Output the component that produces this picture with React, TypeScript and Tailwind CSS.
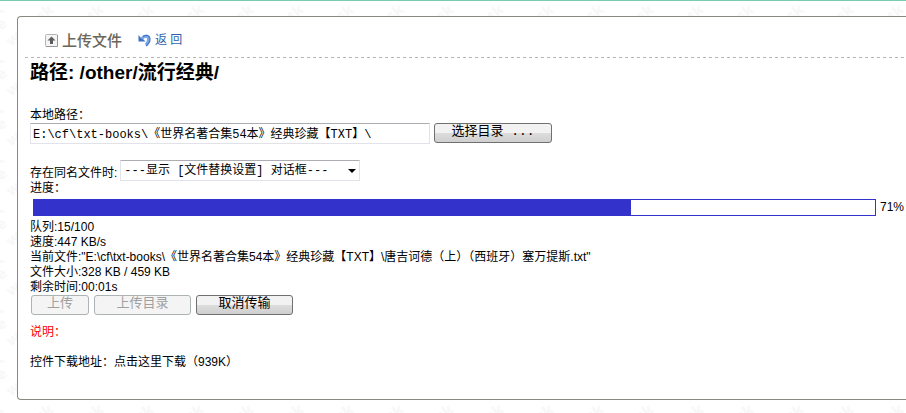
import { useState } from "react"

const stats = [
  { label: "队列", value: "15/100" },
  { label: "速度", value: "447 KB/s" },
  { label: "当前文件", value: '"E:\\cf\\txt-books\\《世界名著合集54本》经典珍藏【TXT】\\唐吉诃德（上）（西班牙）塞万提斯.txt"' },
  { label: "文件大小", value: "328 KB / 459 KB" },
  { label: "剩余时间", value: "00:01s" },
]

const buttonClass =
  "h-5 rounded-[3px] border border-[#707070] bg-linear-to-b from-[#f2f2f2] from-50% via-[#dddddd] via-50% to-[#cfcfcf] pb-0.5 font-['Liberation_Mono','Noto_Sans_CJK_SC',monospace] text-[13px] leading-4 text-black disabled:border-[#adb2b5] disabled:bg-none disabled:bg-[#f4f4f4] disabled:text-[#a0a0a0]"

const UploadIcon = () => (
  <svg width="13" height="13" viewBox="0 0 13 13" aria-hidden="true">
    <rect x="0.5" y="0.5" width="12" height="12" rx="1" fill="#f4f4f4" stroke="#b4b4b4" />
    <path d="M1 12.5h11.5V1" fill="none" stroke="#969696" />
    <path d="M6.5 2.5 10.5 6.5H8V10H5V6.5H2.5Z" fill="#5c5c5c" />
  </svg>
)

const BackIcon = () => (
  <svg width="13" height="13" viewBox="0 0 13 13" aria-hidden="true">
    <path d="M4 4.500C6 1.500 10 1.500 10.500 4.500c.4 2.500-.8 4.500-2.500 6.500" fill="none" stroke="#7ba6e8" strokeWidth="3" />
    <path d="M5 2.500C7.500 .5 11.500 1 12 4.500c.2 3-1.400 5.500-4 7.500" fill="none" stroke="#4376c9" strokeWidth="1.200" />
    <path d="M0.500 1v6.500H7.500L5.500 5.500 3 4Z" fill="#3d70c8" />
  </svg>
)

const Watermark = () => (
  <svg className="absolute inset-0 -z-10 h-full w-full" aria-hidden="true">
    <defs>
      <pattern id="mark" width="50" height="50" patternUnits="userSpaceOnUse">
        <g fill="#f8f8f8" fontFamily="Open Sans" fontSize="15" fontWeight="800">
          <text transform="translate(11 46) rotate(-38)">w</text>
          <text transform="translate(1 30) rotate(-38)">e</text>
          <text transform="translate(41 21) rotate(-38)">sk</text>
          <text transform="translate(-9 21) rotate(-38)">sk</text>
        </g>
      </pattern>
    </defs>
    <rect width="100%" height="100%" fill="url(#mark)" />
  </svg>
)

const App = () => {
  const [path, setPath] = useState("E:\\cf\\txt-books\\《世界名著合集54本》经典珍藏【TXT】\\")
  const progress = 71

  return (
    <div className="relative isolate border-t border-[#7accb0] bg-white pb-[13px] pl-[17px] pt-[15px] font-['Liberation_Sans','Noto_Sans_CJK_SC',sans-serif] text-xs leading-[15px] text-black">
      <Watermark />
      <main className="rounded-l-[4px] border border-r-0 border-[#8b897f] bg-white pb-[29px] pl-[7px]">
        <header className="flex h-[41px] items-center bg-[repeating-linear-gradient(to_right,#b5b5b5_0_3px,transparent_3px_6px)] bg-[length:100%_1px] bg-bottom bg-no-repeat pl-5 pt-1.5">
          <div className="flex items-center gap-1 text-[15px] font-medium text-[#6b665a]">
            <UploadIcon />
            <span>上传文件</span>
          </div>
          <a href="#" className="ml-4 flex items-center gap-1 text-[#2e5fae]">
            <BackIcon />
            <span>返 回</span>
          </a>
        </header>

        <div className="pl-[5px]">
          <h1 className="mt-[3px] text-[19px] font-bold leading-6">路径: /other/流行经典/</h1>

          <label htmlFor="local-path" className="mt-[23px] block">本地路径：</label>
          <div className="flex items-start gap-1">
            <input
              id="local-path"
              type="text"
              value={path}
              onChange={(e) => setPath(e.target.value)}
              className="h-[21px] w-[400px] rounded-[1px] border border-[#e2e3ea] border-t-[#abadb3] bg-white px-0.5 pb-0.5 font-['Liberation_Mono','Noto_Sans_CJK_SC',monospace] text-xs"
            />
            <button type="button" className={`${buttonClass} w-[118px]`}>选择目录 ...</button>
          </div>

          <div className="mt-4 flex items-end gap-[3px]">
            <label htmlFor="conflict">存在同名文件时:</label>
            <div className="relative">
              <select
                id="conflict"
                className="block h-[21px] w-60 appearance-none rounded-[1px] border border-[#e2e3ea] border-t-[#abadb3] bg-white px-[3px] font-['Liberation_Mono','Noto_Sans_CJK_SC',monospace] text-xs leading-4"
              >
                <option>---显示 [文件替换设置] 对话框---</option>
              </select>
              <svg className="pointer-events-none absolute right-1 top-[9px]" width="8" height="4" viewBox="0 0 8 4" aria-hidden="true">
                <path d="M0 0h8L4 4Z" fill="#000" />
              </svg>
            </div>
          </div>

          <div>进度：</div>
          <div className="flex items-center gap-1 pb-1 pl-[3px] pr-0.5 pt-[3px]">
            <div
              role="progressbar"
              aria-label="进度"
              aria-valuenow={progress}
              className="h-[17px] flex-1 border border-[#3333cc]"
            >
              <div className="h-full bg-[#3333cc]" style={{ width: `${progress}%` }} />
            </div>
            <span>{progress}%</span>
          </div>

          {stats.map((item) => (
            <div key={item.label}>{item.label}:{item.value}</div>
          ))}

          <div className="ml-px flex gap-[5px]">
            <button type="button" disabled className={`${buttonClass} w-[58px]`}>上传</button>
            <button type="button" disabled className={`${buttonClass} w-[97px]`}>上传目录</button>
            <button type="button" className={`${buttonClass} w-[97px]`}>取消传输</button>
          </div>

          <p className="mt-[10px] text-[#ff0000]">说明：</p>
          <p className="mt-[15px]">
            控件下载地址：<a href="#">点击这里下载（939K）</a>
          </p>
        </div>
      </main>
    </div>
  )
}

export default App
